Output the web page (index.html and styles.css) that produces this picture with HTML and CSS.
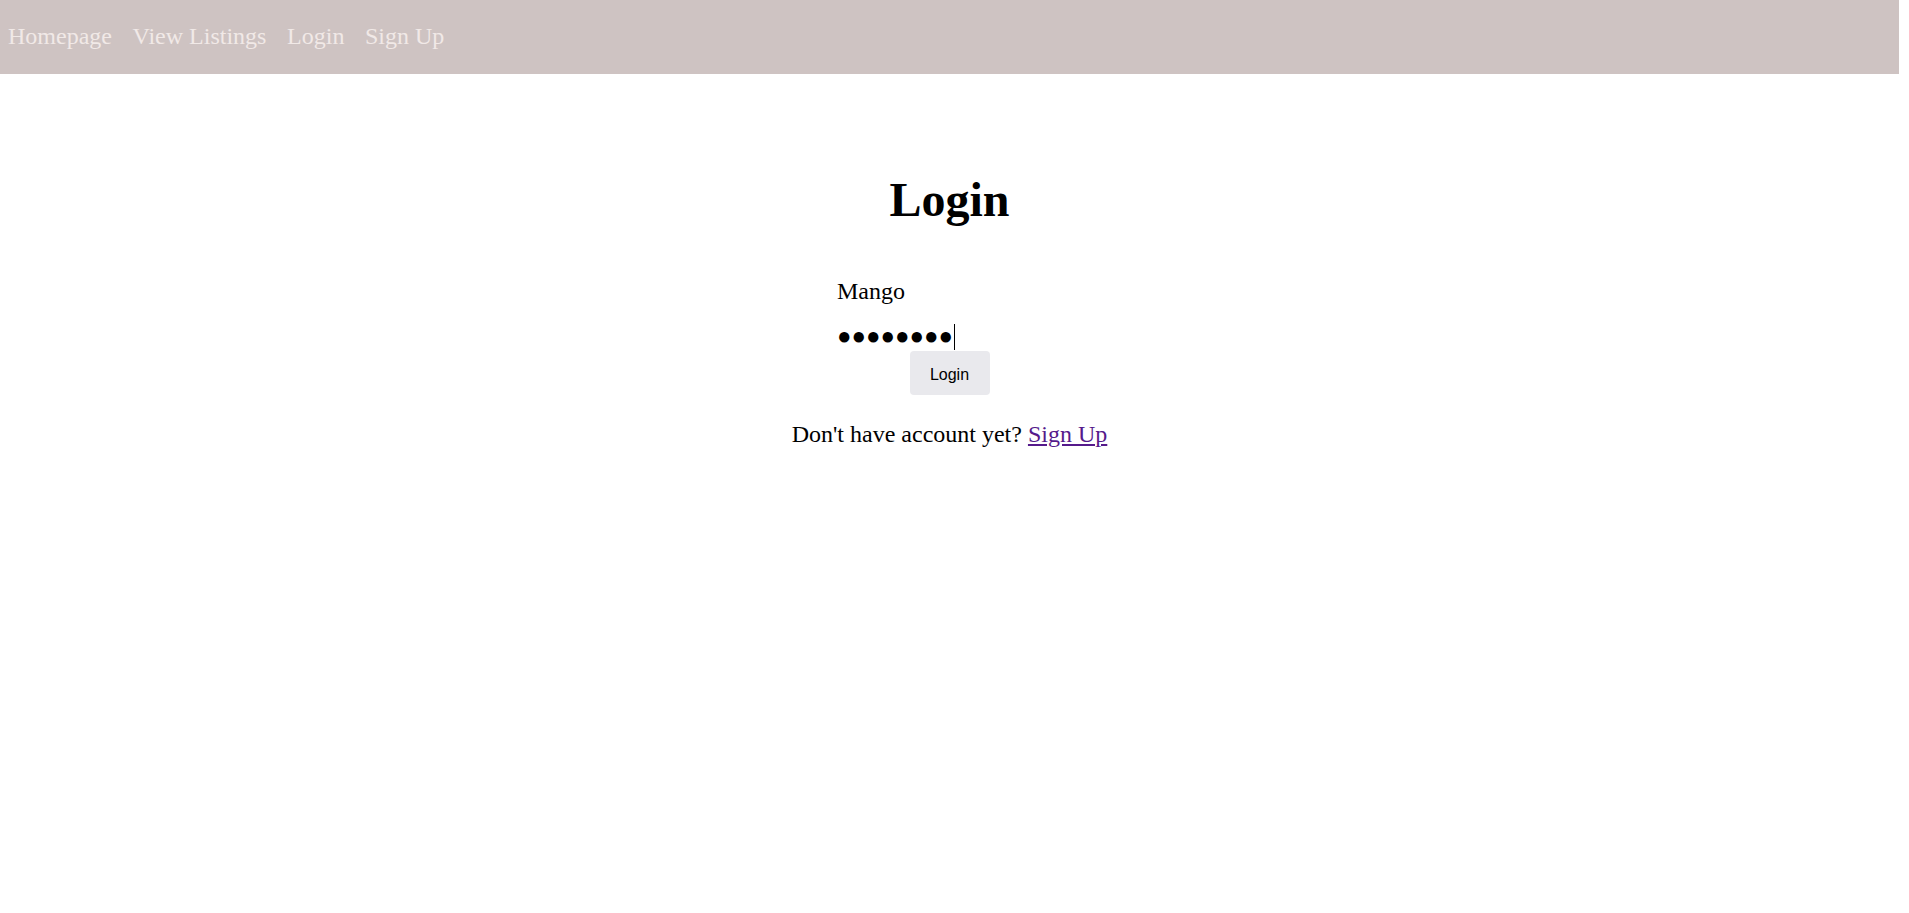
FILE: index.html
```html
<!DOCTYPE html>
<html lang="en">
<head>
<meta charset="utf-8">
<title>Login</title>
<link rel="stylesheet" href="styles.css">
</head>
<body>
<div class="app">
  <nav class="topnav">
    <a class="nav-link" href="#">Homepage</a>
    <a class="nav-link" href="#">View Listings</a>
    <a class="nav-link" href="#">Login</a>
    <a class="nav-link" href="#">Sign Up</a>
  </nav>
  <main class="login">
    <h1 class="login-title">Login</h1>
    <form class="login-form">
      <input class="field" type="text" value="Mango" aria-label="Username">
      <div class="field field-pass"><span class="dots">●●●●●●●●</span><span class="caret"></span></div>
      <button class="btn" type="button">Login</button>
    </form>
    <p class="signup-note">Don't have account yet? <a class="signup-link" href="#">Sign Up</a></p>
  </main>
</div>
</body>
</html>
```

FILE: styles.css
```css
html, body {
  margin: 0;
  padding: 0;
  background: #ffffff;
}
body {
  font-family: "Liberation Serif", "Times New Roman", serif;
  font-size: 24px;
  color: #000;
}
.app {
  margin-right: 10px;
}
.topnav {
  height: 74px;
  background: #cec3c2;
  display: flex;
  align-items: center;
  gap: 20.6px;
  padding-left: 8px;
  padding-bottom: 2px;
  box-sizing: border-box;
}
.nav-link {
  color: #f1e9e7;
  text-decoration: none;
  font-size: 24px;
}
.login {
  display: flex;
  flex-direction: column;
  align-items: center;
}
.login-title {
  font-size: 48px;
  font-weight: bold;
  margin: 98px 0 0;
  line-height: 55px;
}
.login-form {
  display: flex;
  flex-direction: column;
  align-items: center;
  margin-top: 51px;
}
.field {
  width: 225px;
  height: 27px;
  border: none;
  outline: none;
  padding: 0;
  margin: 0;
  background: transparent;
  font-family: inherit;
  font-size: 24px;
  line-height: 27px;
  color: #000;
  box-sizing: border-box;
}
.field-pass {
  margin-top: 18px;
  display: flex;
  align-items: center;
  text-align: left;
}
.dots {
  font-family: "Liberation Serif", "DejaVu Serif", serif;
  font-size: 24px;
  line-height: 27px;
}
.caret {
  display: inline-block;
  width: 1px;
  height: 26px;
  background: #000;
  margin-left: 1px;
}
.btn {
  width: 80px;
  height: 44px;
  border: none;
  border-radius: 4px;
  background: #e9e9ed;
  font-family: "Liberation Sans", Arial, sans-serif;
  font-size: 16px;
  color: #000;
  padding: 4px 0 0;
  margin-top: 1px;
}
.signup-note {
  margin: 25px 0 0;
  font-size: 24px;
  line-height: 28px;
}
.signup-link {
  color: #551a8b;
}
```
